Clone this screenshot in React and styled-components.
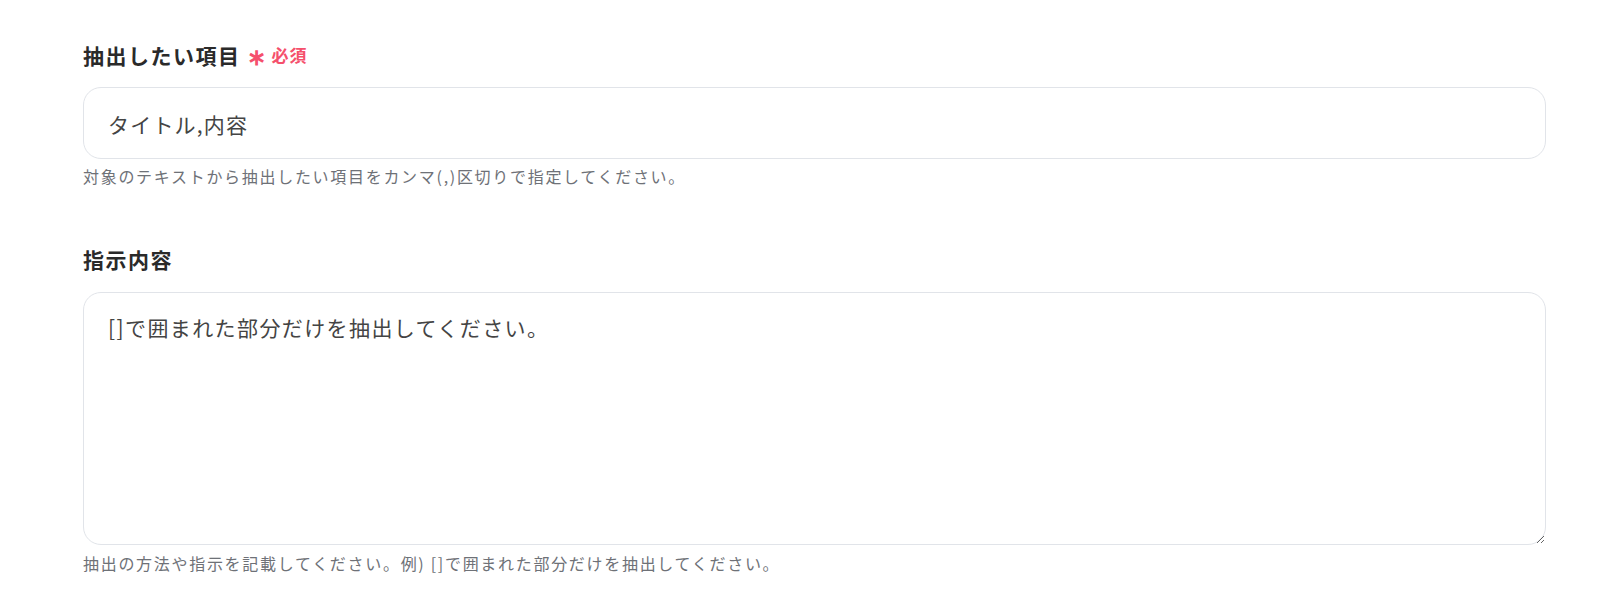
import React from "react";
import styled, { createGlobalStyle } from "styled-components";

const GlobalStyle = createGlobalStyle`
  body {
    margin: 0;
    background: #ffffff;
    font-family: "Noto Sans CJK JP", "Noto Sans", sans-serif;
  }
`;

const Page = styled.div`
  padding: 41px 54px 0 83px;
  display: flex;
  flex-direction: column;
`;

const Field = styled.div`
  display: flex;
  flex-direction: column;
  margin-bottom: ${(p) => p.$gap || 0}px;
`;

const Label = styled.label`
  display: flex;
  align-items: center;
  font-size: 21px;
  line-height: 28px;
  font-weight: 700;
  letter-spacing: 1.5px;
  color: #2a2a2a;
`;

const Required = styled.span`
  display: inline-flex;
  align-items: center;
  margin-left: 6px;
  font-size: 17px;
  font-weight: 700;
  letter-spacing: 1px;
  color: #f5506c;
`;

const Star = styled.span`
  font-size: 23px;
  margin-right: 5px;
  line-height: 1;
`;

const TextInput = styled.input`
  box-sizing: border-box;
  margin-top: 18px;
  width: 100%;
  height: 72px;
  padding: 2px 24px 0;
  border: 1.5px solid #e1e4e9;
  border-radius: 18px;
  font-family: inherit;
  font-size: 21px;
  letter-spacing: 1.2px;
  color: #444444;
  background: #ffffff;
  outline: none;
`;

const TextArea = styled.textarea`
  box-sizing: border-box;
  display: block;
  margin-top: 19px;
  width: 100%;
  height: 253px;
  padding: 19px 24px;
  border: 1.5px solid #e1e4e9;
  border-radius: 18px;
  font-family: inherit;
  font-size: 21px;
  line-height: 30px;
  letter-spacing: 1.4px;
  color: #444444;
  background: #ffffff;
  outline: none;
  resize: vertical;
`;

const Help = styled.p`
  margin: ${(p) => p.$top || 0}px 0 0;
  font-size: 16px;
  line-height: 20px;
  letter-spacing: 1.7px;
  color: #6e7177;
`;

const App = () => {
  return (
    <>
      <GlobalStyle />
      <Page>
        <Field $gap={59}>
          <Label>
            抽出したい項目
            <Required>
              <Star>∗</Star>必須
            </Required>
          </Label>
          <TextInput readOnly value="タイトル,内容" />
          <Help $top={7}>
            対象のテキストから抽出したい項目をカンマ(,)区切りで指定してください。
          </Help>
        </Field>
        <Field>
          <Label>指示内容</Label>
          <TextArea readOnly value="[]で囲まれた部分だけを抽出してください。" />
          <Help $top={8}>
            抽出の方法や指示を記載してください。例) []で囲まれた部分だけを抽出してください。
          </Help>
        </Field>
      </Page>
    </>
  );
};

export default App;
